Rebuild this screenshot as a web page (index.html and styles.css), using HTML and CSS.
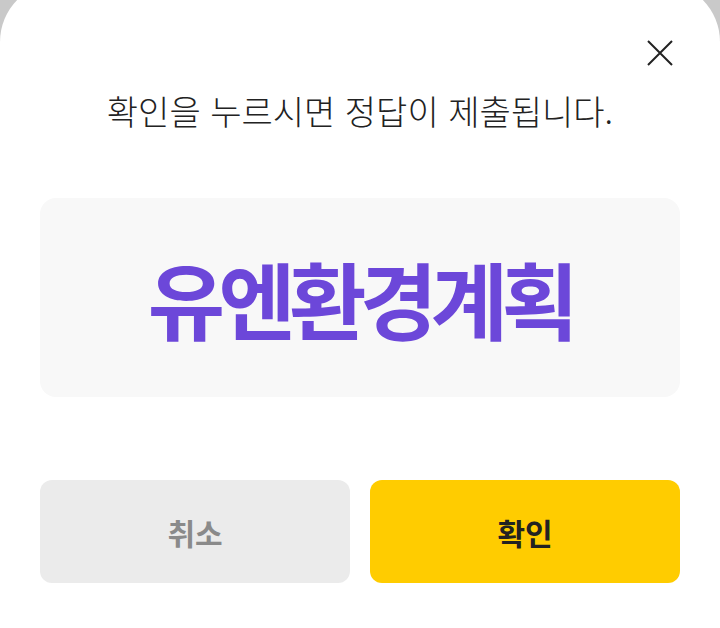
FILE: index.html
```html
<!DOCTYPE html>
<html lang="ko">
<head>
  <meta charset="UTF-8">
  <meta name="viewport" content="width=device-width, initial-scale=1.0">
  <title>정답 제출</title>
  <link rel="stylesheet" href="styles.css">
</head>
<body>
  <div class="sheet">
    <div class="sheet-top">
      <button class="close-btn" aria-label="닫기">
        <svg width="26" height="26" viewBox="0 0 26 26">
          <path d="M1 1 L25 25 M25 1 L1 25" stroke="#222" stroke-width="2" fill="none"/>
        </svg>
      </button>
    </div>

    <p class="notice">확인을 누르시면 정답이 제출됩니다.</p>

    <div class="answer-box">
      <span class="answer">유엔환경계획</span>
    </div>

    <div class="actions">
      <button class="btn btn-cancel">취소</button>
      <button class="btn btn-ok">확인</button>
    </div>
  </div>
</body>
</html>
```

FILE: styles.css
```css
body {
  margin: 0;
  background-color: #c9c9c9;
  font-family: "Noto Sans CJK KR", "Noto Sans", sans-serif;
  color: #222;
  overflow: hidden;
}

.sheet {
  background-color: #fff;
  border-radius: 60px 60px 0 0;
  margin-top: -18px;
  height: 646px;
  padding: 51px 40px 0;
  box-sizing: border-box;
}

.sheet-top {
  display: flex;
  justify-content: flex-end;
}

.close-btn {
  width: 40px;
  height: 40px;
  padding: 0;
  border: none;
  background: none;
  display: flex;
  align-items: center;
  justify-content: center;
  cursor: pointer;
}

.notice {
  margin: 15px 0 0;
  font-size: 34px;
  font-weight: 300;
  line-height: 45px;
  text-align: center;
}

.answer-box {
  margin-top: 65px;
  height: 199px;
  border-radius: 16px;
  background-color: #f8f8f8;
  display: flex;
  align-items: center;
  justify-content: center;
}

.answer {
  font-size: 84px;
  font-weight: 700;
  letter-spacing: -6.5px;
  color: #6c47d9;
}

.actions {
  margin-top: 83px;
  display: grid;
  grid-template-columns: 1fr 1fr;
  gap: 20px;
}

.btn {
  height: 103px;
  border: none;
  border-radius: 12px;
  font-family: inherit;
  font-size: 30px;
  font-weight: 700;
  cursor: pointer;
}

.btn-cancel {
  background-color: #ebebeb;
  color: #8a8a8a;
}

.btn-ok {
  background-color: #ffcc00;
  color: #222;
}
```
